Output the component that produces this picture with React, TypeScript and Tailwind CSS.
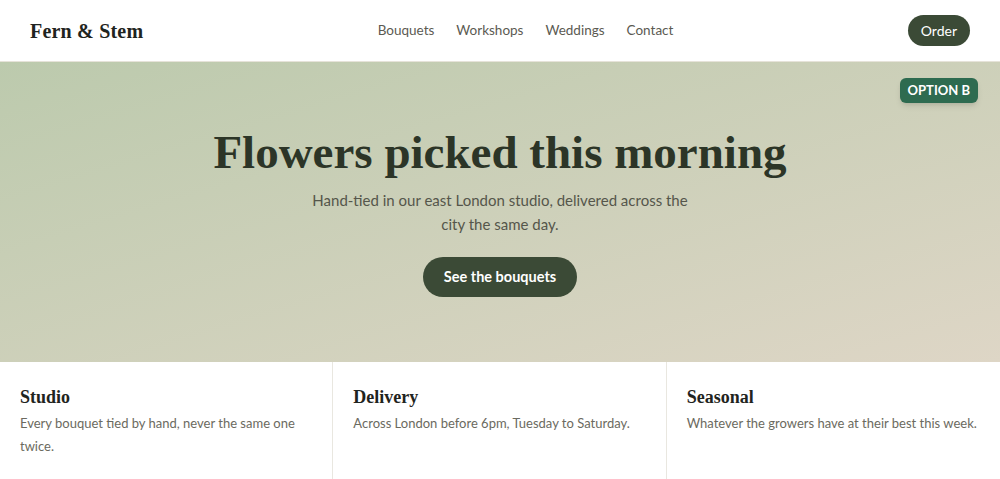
import React from "react";

const serif = { fontFamily: '"Liberation Serif", "DejaVu Serif", serif' };
const sans = { fontFamily: 'Lato, Inter, "Noto Sans", sans-serif' };

export default function App() {
  return (
    <div className="w-full bg-white text-[#2c3527]" style={sans}>
      <header className="h-[62px] flex items-center justify-between px-[30px] border-b border-[#e6e3d9]">
        <div className="text-[20px] font-bold text-[#1f2420] tracking-[0.2px]" style={serif}>
          Fern &amp; Stem
        </div>
        <nav className="flex items-center gap-[22px] text-[13.5px] text-[#5b5a52]">
          <a>Bouquets</a>
          <a>Workshops</a>
          <a>Weddings</a>
          <a>Contact</a>
        </nav>
        <button className="h-[31px] px-[13px] rounded-full bg-[#3b4a36] text-white text-[14px]">
          Order
        </button>
      </header>
      <section className="relative h-[300px] flex flex-col items-center bg-gradient-to-br from-[#bccaad] to-[#ded6c6]">
        <div className="absolute top-[16px] right-[22px] h-[25px] px-[8px] flex items-center rounded-md bg-[#2e6b50] text-white text-[13px] font-bold shadow-md">
          OPTION B
        </div>
        <h1 className="mt-[62px] text-[47px] leading-[56px] font-bold text-[#2c3527]" style={serif}>
          Flowers picked this morning
        </h1>
        <p className="mt-[8px] w-[380px] text-center text-[15px] leading-[24px] text-[#55564b]">
          Hand-tied in our east London studio, delivered across the city the same day.
        </p>
        <button className="mt-[21px] h-[40px] w-[154px] rounded-full bg-[#3b4a36] text-white text-[14.5px] font-bold">
          See the bouquets
        </button>
      </section>
      <section className="grid grid-cols-3 h-[117px]">
        <div className="pl-[20px] pr-[18px] pt-[22px] border-r border-[#e9e7e0]">
          <h3 className="text-[18px] font-bold text-[#1f2420] leading-[26px]" style={serif}>Studio</h3>
          <p className="mt-[2px] text-[13px] leading-[23px] text-[#6b6a60]">
            Every bouquet tied by hand, never the same one twice.
          </p>
        </div>
        <div className="pl-[20px] pr-[18px] pt-[22px] border-r border-[#e9e7e0]">
          <h3 className="text-[18px] font-bold text-[#1f2420] leading-[26px]" style={serif}>Delivery</h3>
          <p className="mt-[2px] text-[13px] leading-[23px] text-[#6b6a60]">
            Across London before 6pm, Tuesday to Saturday.
          </p>
        </div>
        <div className="pl-[20px] pr-[18px] pt-[22px]">
          <h3 className="text-[18px] font-bold text-[#1f2420] leading-[26px]" style={serif}>Seasonal</h3>
          <p className="mt-[2px] text-[13px] leading-[23px] text-[#6b6a60]">
            Whatever the growers have at their best this week.
          </p>
        </div>
      </section>
    </div>
  );
}
